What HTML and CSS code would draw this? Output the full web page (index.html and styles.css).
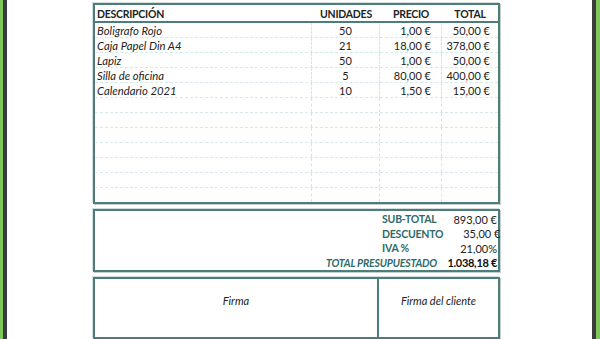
FILE: index.html
```html
<!DOCTYPE html>
<html lang="es">
<head>
<meta charset="utf-8">
<link rel="stylesheet" href="styles.css">
</head>
<body>
<div class="page">
  <div class="edge edge-left"><span class="green"></span><span class="dark"></span></div>
  <main class="sheet">
    <section class="box items">
      <div class="row head">
        <div class="c desc">DESCRIPCIÓN</div>
        <div class="c num">UNIDADES</div>
        <div class="c num">PRECIO</div>
        <div class="c num">TOTAL</div>
      </div>
      <div class="row"><div class="c desc it">Boligrafo Rojo</div><div class="c num">50</div><div class="c r">1,00 €</div><div class="c r">50,00 €</div></div>
      <div class="row"><div class="c desc it">Caja Papel Din A4</div><div class="c num">21</div><div class="c r">18,00 €</div><div class="c r">378,00 €</div></div>
      <div class="row"><div class="c desc it">Lapiz</div><div class="c num">50</div><div class="c r">1,00 €</div><div class="c r">50,00 €</div></div>
      <div class="row"><div class="c desc it">Silla de oficina</div><div class="c num">5</div><div class="c r">80,00 €</div><div class="c r">400,00 €</div></div>
      <div class="row"><div class="c desc it">Calendario 2021</div><div class="c num">10</div><div class="c r">1,50 €</div><div class="c r">15,00 €</div></div>
      <div class="row"><div class="c desc"></div><div class="c num"></div><div class="c r"></div><div class="c r"></div></div>
      <div class="row"><div class="c desc"></div><div class="c num"></div><div class="c r"></div><div class="c r"></div></div>
      <div class="row"><div class="c desc"></div><div class="c num"></div><div class="c r"></div><div class="c r"></div></div>
      <div class="row"><div class="c desc"></div><div class="c num"></div><div class="c r"></div><div class="c r"></div></div>
      <div class="row"><div class="c desc"></div><div class="c num"></div><div class="c r"></div><div class="c r"></div></div>
      <div class="row"><div class="c desc"></div><div class="c num"></div><div class="c r"></div><div class="c r"></div></div>
      <div class="row last"><div class="c desc"></div><div class="c num"></div><div class="c r"></div><div class="c r"></div></div>
    </section>

    <section class="box summary">
      <div class="srow"><span class="lbl">SUB-TOTAL</span><span class="val">893,00 €</span></div>
      <div class="srow"><span class="lbl">DESCUENTO</span><span class="val">35,00 €</span></div>
      <div class="srow"><span class="lbl">IVA %</span><span class="val">21,00%</span></div>
      <div class="srow total"><span class="lbl">TOTAL PRESUPUESTADO</span><span class="val">1.038,18 €</span></div>
    </section>

    <section class="box sign">
      <div class="scell left">Firma</div>
      <div class="scell right">Firma del cliente</div>
    </section>
  </main>
  <div class="edge edge-right"><span class="dark"></span><span class="green"></span></div>
</div>
</body>
</html>
```

FILE: styles.css
```css
* { box-sizing: border-box; }
html, body { margin: 0; padding: 0; background: #fff; }
body {
  font-family: "Lato", "Open Sans", sans-serif;
  font-size: 11px;
  color: #222;
  width: 600px;
  height: 339px;
  overflow: hidden;
}
.page { display: flex; height: 339px; }
.edge { display: flex; height: 100%; }
.edge .green { width: 3px; background: #7cc85a; }
.edge .dark { width: 4px; background: #3b3b3b; }
.edge-left { width: 7px; }
.edge-right { width: 8px; margin-left: auto; }
.edge-right .dark { width: 4px; }
.edge-right .green { width: 4px; }

.sheet {
  width: 407px;
  margin-left: 86px;
  padding-top: 3px;
  display: flex;
  flex-direction: column;
  gap: 5px;
}
.box {
  border: 2px solid #4d7c7a;
  box-shadow: 1px 1px 0 #c4cfce, -1px -1px 0 #d6dede;
}

.items { display: flex; flex-direction: column; }
.row { display: grid; grid-template-columns: 217px 68px 62px 1fr; height: 15px; border-bottom: 1px dashed #d3ebec; }
.row.head { height: 18px; border-bottom: 2px solid #4d7c7a; font-weight: 700; font-size: 10.5px; letter-spacing: -0.25px; }
.row.last { border-bottom: none; height: 14px; }
.c { padding: 0 2px; line-height: 15px; white-space: nowrap; border-right: 1px dashed #cfe7e9; }
.row .c:last-child { border-right: none; }
.head .c { line-height: 18px; border-right: none; }
.it { font-style: italic; font-size: 11.3px; }
.num { text-align: center; }
.r { text-align: right; padding-right: 10px; }
.row .c.r:last-child { padding-right: 8px; }

.summary { height: 63px; padding-top: 1px; display: flex; flex-direction: column; }
.srow { display: grid; grid-template-columns: 1fr 58px; height: 15.5px; align-items: center; white-space: nowrap; }
.lbl { padding-left: 287px; color: #2e6b69; font-weight: 700; font-size: 10.5px; letter-spacing: -0.2px; }
.val { text-align: right; padding-right: 1px; }
.total .lbl { padding-left: 0; padding-right: 3px; font-style: italic; text-align: right; }
.total .val { font-weight: 700; color: #111; letter-spacing: -0.3px; }

.sign { display: flex; height: 80px; }
.scell { font-style: italic; text-align: center; padding-top: 15px; }
.scell.left { width: 284px; border-right: 2px solid #4d7c7a; }
.scell.right { flex: 1; }
```
